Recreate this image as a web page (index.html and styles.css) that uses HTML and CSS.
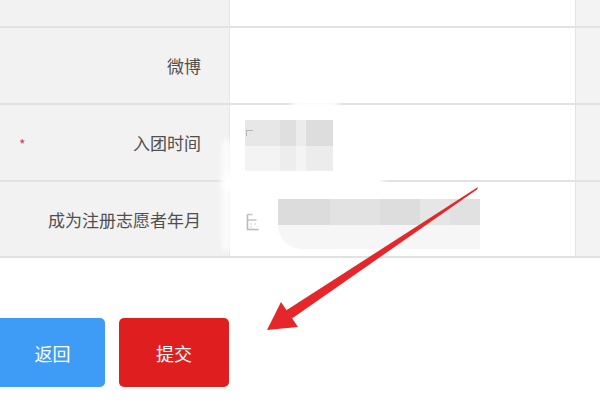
FILE: index.html
```html
<!DOCTYPE html>
<html lang="zh-CN">
<head>
<meta charset="utf-8">
<title>表单</title>
<link rel="stylesheet" href="styles.css">
</head>
<body>
<div class="page">
  <div class="form-table">
    <div class="row">
      <div class="label"></div>
      <div class="value"></div>
      <div class="extra"></div>
    </div>
    <div class="row">
      <div class="label"><span class="text">微博</span></div>
      <div class="value"></div>
      <div class="extra"></div>
    </div>
    <div class="row">
      <div class="label"><span class="star">*</span><span class="text">入团时间</span></div>
      <div class="value">
        <div class="mosaic m1">
          <span class="ic-corner"></span>
          <div class="tile" style="background:#e7e7e7"></div>
          <div class="tile" style="background:#dfdfdf"></div>
          <div class="tile" style="background:#ececec"></div>
          <div class="tile" style="background:#dddddd"></div>
          <div class="tile" style="background:#f3f3f3"></div>
          <div class="tile" style="background:#ededed"></div>
          <div class="tile" style="background:#f4f4f4"></div>
          <div class="tile" style="background:#ececec"></div>
        </div>
      </div>
      <div class="extra"></div>
    </div>
    <div class="row">
      <div class="label"><span class="text">成为注册志愿者年月</span></div>
      <div class="value">
        <svg class="cal" width="16" height="21" viewBox="0 0 16 21">
          <path d="M2.5 3.5v15h11" fill="none" stroke="#b9b9b9" stroke-width="1.6"/>
          <path d="M2.5 3.5h5M2.5 9h9" fill="none" stroke="#c4c4c4" stroke-width="1.4"/>
          <path d="M5 13h2M9 13h2M5 16h2" fill="none" stroke="#cfcfcf" stroke-width="1.2"/>
        </svg>
        <div class="mosaic m2">
          <div class="bar">
            <div class="tile" style="background:#dcdcdc;flex:52"></div>
            <div class="tile" style="background:#e2e2e2;flex:50"></div>
            <div class="tile" style="background:#dddddd;flex:40"></div>
            <div class="tile" style="background:#e6e6e6;flex:30"></div>
            <div class="tile" style="background:#e1e1e1;flex:30"></div>
          </div>
          <div class="under"></div>
        </div>
      </div>
      <div class="extra"></div>
    </div>
  </div>

  <div class="actions">
    <button class="btn btn-back">返回</button>
    <button class="btn btn-submit">提交</button>
  </div>

  <div class="smear s1"></div>
  <div class="smear s2"></div>
  <div class="smear s3"></div>

  <svg class="arrow" width="600" height="420" viewBox="0 0 600 420">
    <polygon points="478,187 477,189.5 292,318.5 286,310.5" fill="#e5262b"/>
    <polygon points="267,330 281,302 298,327" fill="#e5262b"/>
  </svg>
</div>
</body>
</html>
```

FILE: styles.css
```css
html, body {
  margin: 0;
  padding: 0;
  background: #ffffff;
}

.page {
  position: relative;
  width: 600px;
  height: 420px;
  overflow: hidden;
  font-family: "Noto Sans CJK SC", "Noto Sans", sans-serif;
}

.form-table {
  margin-top: -49px;
  border-bottom: 2px solid #e2e2e2;
}

.row {
  display: grid;
  grid-template-columns: 230px 345px 1fr;
  height: 75px;
  border-bottom: 2px solid #e2e2e2;
}

.row:last-child {
  border-bottom: none;
  height: 74px;
}

.label {
  display: flex;
  align-items: center;
  background: #f2f2f2;
  border-right: 1px solid #e6e6e6;
  padding: 0 28px 0 19px;
  color: #4f4f4f;
  font-size: 17px;
}

.label .text {
  margin-left: auto;
}

.star {
  color: #d0415a;
  font-size: 14px;
  line-height: 1;
  margin-top: 2px;
}

.value {
  display: flex;
  align-items: center;
  padding-left: 15px;
  background: #ffffff;
}

.extra {
  background: #f3f3f3;
  border-left: 1px solid #e4e4e4;
}

.mosaic.m1 {
  position: relative;
  display: grid;
  grid-template-columns: 35px 16px 10px 27px;
  grid-template-rows: 26px 25px;
  margin-top: 6px;
}

.ic-corner {
  position: absolute;
  left: 1px;
  top: 10px;
  width: 6px;
  height: 5px;
  border-top: 1.5px solid #b5b5b5;
  border-left: 1.5px solid #b5b5b5;
}

.cal {
  margin-top: 4px;
}

.mosaic.m2 {
  display: flex;
  flex-direction: column;
  margin-left: 17px;
  margin-top: 10px;
  width: 202px;
}

.bar {
  display: flex;
  height: 26px;
}

.under {
  height: 24px;
  background: #f6f6f6;
  border-radius: 0 0 0 30px;
}

.actions {
  display: flex;
  gap: 14px;
  margin-top: 60px;
  margin-left: -8px;
}

.btn {
  height: 69px;
  border: none;
  border-radius: 5px;
  color: #ffffff;
  font-family: "Noto Sans CJK SC", "Noto Sans", sans-serif;
  font-size: 18px;
  padding: 0;
}

.btn-back {
  width: 113px;
  background: #3f9cf6;
  padding-left: 8px;
}

.btn-submit {
  width: 110px;
  background: #df1f1f;
}

.smear {
  position: absolute;
  background: #ffffff;
  filter: blur(3px);
}

.s1 {
  left: 292px;
  top: 100px;
  width: 46px;
  height: 11px;
}

.s2 {
  left: 222px;
  top: 174px;
  width: 162px;
  height: 17px;
  border-radius: 10px;
}

.s3 {
  left: 222px;
  top: 140px;
  width: 10px;
  height: 112px;
  border-radius: 6px;
  background: rgba(255, 255, 255, 0.8);
}

.arrow {
  position: absolute;
  left: 0;
  top: 0;
  pointer-events: none;
}
```
